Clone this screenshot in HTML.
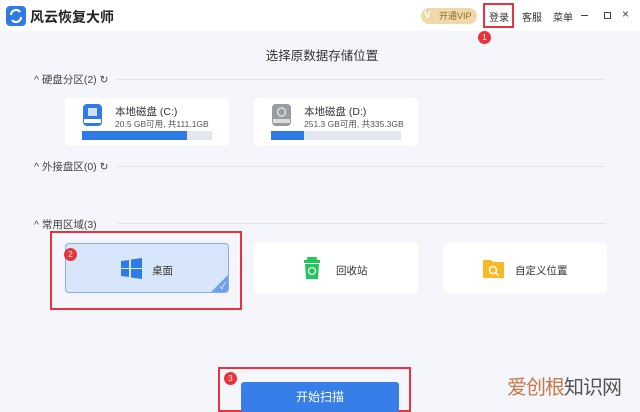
<!DOCTYPE html>
<html><head><meta charset="utf-8"><style>
*{margin:0;padding:0;box-sizing:border-box}
body{width:640px;height:405px;overflow:hidden;background:#f4f6fb;font-family:"Liberation Sans","Noto Sans CJK SC",sans-serif;color:#333;position:relative}
.a{position:absolute}
.top{left:0;top:0;width:640px;height:31px;background:#fff}
.card{background:#fff;border-radius:4px}
.sec{font-size:10.5px;color:#444}
.line{height:1px;background:#e1e4ea}
.badge{width:13px;height:13px;border-radius:50%;background:#e8333a;color:#fff;font-size:8px;text-align:center;line-height:13px}
.rb{border:2px solid #e8333a}
</style></head><body>
<div class="a top"></div>
<svg class="a" style="left:6px;top:6px" width="20" height="20" viewBox="0 0 20 20"><rect width="20" height="20" rx="4" fill="#2f7be5"/><path d="M5 9a5 5 0 0 1 9-3" stroke="#fff" stroke-width="2.2" fill="none"/><path d="M15 11a5 5 0 0 1-9 3" stroke="#fff" stroke-width="2.2" fill="none"/></svg>
<div class="a" style="left:30px;top:7px;font-size:14px;font-weight:bold;color:#222">风云恢复大师</div>
<div class="a" style="left:421px;top:8px;width:56px;height:16px;border-radius:8px;background:#efd9aa;font-size:9px;color:#8a6a2a;line-height:16px;padding-left:18px">开通VIP</div>
<div class="a" style="left:424px;top:10px;color:#fff;font-size:10px;font-weight:bold">V</div>
<div class="a rb" style="left:483px;top:3px;width:31px;height:25px"></div>
<div class="a" style="left:489px;top:9px;font-size:10px">登录</div>
<div class="a badge" style="left:478px;top:31px">1</div>
<div class="a" style="left:522px;top:9px;font-size:10px">客服</div>
<div class="a" style="left:553px;top:9px;font-size:10px">菜单</div>
<div class="a" style="left:581px;top:15px;width:7px;height:1px;background:#444"></div>
<div class="a" style="left:604px;top:12px;width:7px;height:7px;border:1.3px solid #444"></div>
<div class="a" style="left:622px;top:7px;font-size:12px;color:#444">×</div>
<div class="a" style="left:0;width:640px;top:45px;text-align:center;font-size:12.5px;color:#333;padding-left:4px">选择原数据存储位置</div>

<div class="a sec" style="left:34px;top:72px">^ 硬盘分区(2) ↻</div>
<div class="a line" style="left:116px;top:79px;width:489px"></div>
<div class="a card" style="left:65px;top:98px;width:164px;height:48px"></div>
<svg class="a" style="left:82px;top:104px" width="21" height="22" viewBox="0 0 21 22"><rect x="1" y="0" width="19" height="22" rx="4" fill="#2f7be5"/><rect x="6" y="4" width="9" height="8" fill="#cfe0fb"/><rect x="2" y="15" width="17" height="4" fill="#fff"/></svg>
<div class="a" style="left:115px;top:104px;font-size:10.5px">本地磁盘 (C:)</div>
<div class="a" style="left:115px;top:118px;font-size:8.5px;color:#555">20.5 GB可用, 共111.1GB</div>
<div class="a" style="left:82px;top:131px;width:130px;height:9px;background:#e3e7ef"></div>
<div class="a" style="left:82px;top:131px;width:105px;height:9px;background:#2f7be5"></div>
<div class="a card" style="left:254px;top:98px;width:164px;height:48px"></div>
<svg class="a" style="left:271px;top:104px" width="21" height="22" viewBox="0 0 21 22"><rect x="1" y="0" width="19" height="22" rx="4" fill="#999ba3"/><circle cx="10.5" cy="8" r="4" fill="none" stroke="#ddd" stroke-width="1.5"/><rect x="2" y="15" width="17" height="4" fill="#ddd"/></svg>
<div class="a" style="left:304px;top:104px;font-size:10.5px">本地磁盘 (D:)</div>
<div class="a" style="left:304px;top:118px;font-size:8.5px;color:#555">251.3 GB可用, 共335.3GB</div>
<div class="a" style="left:271px;top:131px;width:130px;height:9px;background:#e3e7ef"></div>
<div class="a" style="left:271px;top:131px;width:33px;height:9px;background:#2f7be5"></div>

<div class="a sec" style="left:34px;top:159px">^ 外接盘区(0) ↻</div>
<div class="a line" style="left:116px;top:166px;width:489px"></div>

<div class="a sec" style="left:34px;top:217px">^ 常用区域(3)</div>
<div class="a line" style="left:117px;top:223px;width:489px"></div>
<div class="a rb" style="left:50px;top:231px;width:192px;height:79px"></div>
<div class="a" style="left:65px;top:243px;width:164px;height:50px;background:#d8e6fb;border:1px solid #86aef0;border-radius:4px;overflow:hidden"><div class="a" style="right:-12px;bottom:-12px;width:24px;height:24px;background:#6f9ff0;transform:rotate(45deg)"></div><div class="a" style="right:2px;bottom:0;color:#fff;font-size:9px">✓</div></div>
<div class="a badge" style="left:64px;top:248px">2</div>
<svg class="a" style="left:121px;top:258px" width="21" height="21" viewBox="0 0 21 21"><path d="M0 3l8-1v8H0zM10 1.5L21 0v10H10zM0 11h8v8l-8-1zM10 11h11v10l-11-1.5z" fill="#2f7be5"/></svg>
<div class="a" style="left:152px;top:263px;font-size:10.5px">桌面</div>
<div class="a card" style="left:254px;top:243px;width:164px;height:50px"></div>
<svg class="a" style="left:304px;top:257px" width="16" height="22" viewBox="0 0 16 22"><rect x="3" y="0" width="10" height="3" rx="1" fill="#22c55e"/><rect x="0" y="3" width="16" height="3" fill="#22c55e"/><path d="M1 7h14l-1 15H2z" fill="#22c55e"/><circle cx="8" cy="14" r="3.5" fill="none" stroke="#fff" stroke-width="1.2"/></svg>
<div class="a" style="left:336px;top:263px;font-size:10.5px">回收站</div>
<div class="a card" style="left:443px;top:243px;width:164px;height:50px"></div>
<svg class="a" style="left:483px;top:259px" width="21" height="19" viewBox="0 0 21 19"><path d="M0 1h8l2 2h11v16H0z" fill="#f7b924"/><circle cx="10" cy="11" r="3.5" fill="none" stroke="#fff" stroke-width="1.5"/><path d="M12.5 13.5l3 3" stroke="#fff" stroke-width="1.5"/></svg>
<div class="a" style="left:515px;top:263px;font-size:10.5px">自定义位置</div>

<div class="a rb" style="left:218px;top:367px;width:193px;height:45px"></div>
<div class="a badge" style="left:224px;top:372px">3</div>
<div class="a" style="left:241px;top:382px;width:158px;height:30px;background:#377ee8;border-radius:3px;color:#fff;font-size:12px;text-align:center;line-height:30px">开始扫描</div>
<div class="a" style="left:507px;top:371px;font-size:20px;color:#555;letter-spacing:-1px"><span style="color:#c9784a">爱创根</span>知识网</div>
</body></html>
